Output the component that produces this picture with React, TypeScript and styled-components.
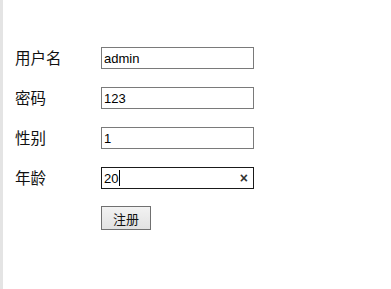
import React from "react";
import styled, { createGlobalStyle } from "styled-components";

const GlobalStyle = createGlobalStyle`
  html, body {
    margin: 0;
    padding: 0;
    background: #ffffff;
  }
`;

const fields = [
  { label: "用户名", value: "admin" },
  { label: "密码", value: "123" },
  { label: "性别", value: "1" },
  { label: "年龄", value: "20", focused: true },
];

const App = () => {
  return (
    <Page>
      <GlobalStyle />
      <Form>
        {fields.map((f) => (
          <Row key={f.label}>
            <Label>{f.label}</Label>
            <InputWrap>
              <Input
                defaultValue={f.value}
                readOnly
                $focused={!!f.focused}
              />
              {f.focused && (
                <>
                  <Caret />
                  <Clear>×</Clear>
                </>
              )}
            </InputWrap>
          </Row>
        ))}
        <Row>
          <Label />
          <Button type="button">注册</Button>
        </Row>
      </Form>
    </Page>
  );
};

export default App;

const Page = styled.div`
  width: 391px;
  height: 289px;
  box-sizing: border-box;
  border-left: 3px solid #e4e4e4;
  font-family: "Noto Sans CJK SC", "Liberation Sans", sans-serif;
`;

const Form = styled.div`
  display: flex;
  flex-direction: column;
  gap: 18px;
  padding: 47px 0 0 12px;
`;

const Row = styled.div`
  display: flex;
  align-items: center;
  height: 22px;
  &:last-child {
    height: 24px;
    margin-top: -1px;
  }
`;

const Label = styled.div`
  width: 86px;
  font-size: 15.5px;
  color: #111;
  line-height: 22px;
  margin-top: -2px;
`;

const InputWrap = styled.div`
  position: relative;
  width: 153px;
  height: 22px;
`;

const Input = styled.input<{ $focused: boolean }>`
  display: block;
  box-sizing: border-box;
  width: 153px;
  height: 22px;
  margin: 0;
  padding: 0 2px;
  border: 1px solid ${(p) => (p.$focused ? "#1a1a1a" : "#7a7a7a")};
  outline: none;
  font-family: "Liberation Sans", Arial, sans-serif;
  font-size: 13px;
  color: #000;
  background: #fff;
  caret-color: transparent;
`;

const Caret = styled.span`
  position: absolute;
  left: 18px;
  top: 3px;
  width: 1px;
  height: 16px;
  background: #000;
`;

const Clear = styled.span`
  position: absolute;
  right: 6px;
  top: 0;
  font-family: "Liberation Sans", Arial, sans-serif;
  font-size: 14px;
  font-weight: bold;
  line-height: 22px;
  color: #333;
`;

const Button = styled.button`
  display: block;
  box-sizing: border-box;
  width: 50px;
  height: 24px;
  margin: 0;
  padding: 0;
  border: 1px solid #707070;
  border-radius: 0;
  background: linear-gradient(#f2f2f2, #e2e2e2);
  font-family: "Noto Sans CJK SC", sans-serif;
  font-size: 13px;
  color: #111;
`;
